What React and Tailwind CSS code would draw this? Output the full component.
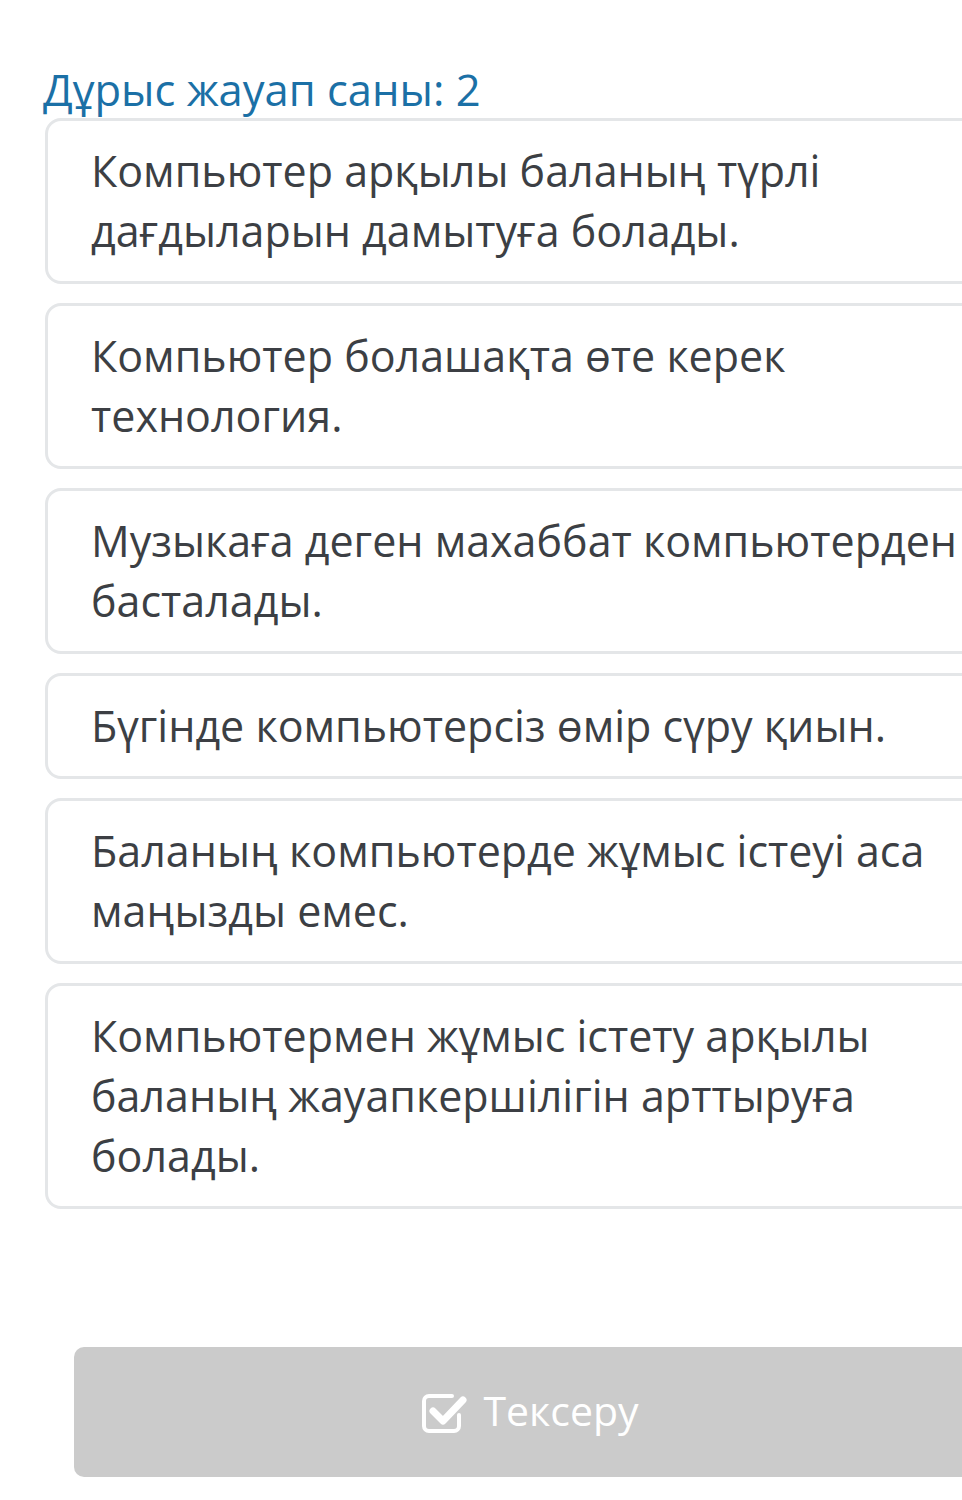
import React from 'react';

const options = [
  'Компьютер арқылы баланың түрлі дағдыларын дамытуға болады.',
  'Компьютер болашақта өте керек технология.',
  'Музыкаға деген махаббат компьютерден басталады.',
  'Бүгінде компьютерсіз өмір сүру қиын.',
  'Баланың компьютерде жұмыс істеуі аса маңызды емес.',
  'Компьютермен жұмыс істету арқылы баланың жауапкершілігін арттыруға болады.',
];

function CheckSquare() {
  return (
    <svg width="48" height="44" viewBox="0 0 48 44" fill="none">
      <path
        d="M33 6 H10 a5 5 0 0 0 -5 5 V36 a5 5 0 0 0 5 5 H35 a5 5 0 0 0 5 -5 V25"
        stroke="white"
        strokeWidth="4"
        strokeLinecap="round"
      />
      <path d="M14 21 L24 31 L44 10" stroke="white" strokeWidth="7" strokeLinecap="round" strokeLinejoin="round" />
    </svg>
  );
}

export default function App() {
  return (
    <div className="w-[962px] h-[1500px] overflow-hidden bg-white font-['Open_Sans',sans-serif]">
      <div className="w-[1000px] pl-[45px] pt-[62px]">
        <h2 className="text-[43.5px] leading-[56px] text-[#1b70a6] -ml-[2px]">
          Дұрыс жауап саны: 2
        </h2>
        <div className="flex flex-col gap-[19px]">
          {options.map((text, i) => (
            <div
              key={i}
              className="border-[3px] border-[#e4e6e8] rounded-[16px] pl-[43px] pr-[10px] py-[20px]"
            >
              <p className="text-[43px] leading-[60px] text-[#3c3f44]">{text}</p>
            </div>
          ))}
        </div>
        <div className="mt-[138px] ml-[29px] h-[130px] rounded-[10px] bg-[#cbcbcb] flex items-center justify-center gap-[16px] pr-[16px]">
          <CheckSquare />
          <span className="text-[41px] text-white leading-none -mt-[4px]">Тексеру</span>
        </div>
      </div>
    </div>
  );
}
